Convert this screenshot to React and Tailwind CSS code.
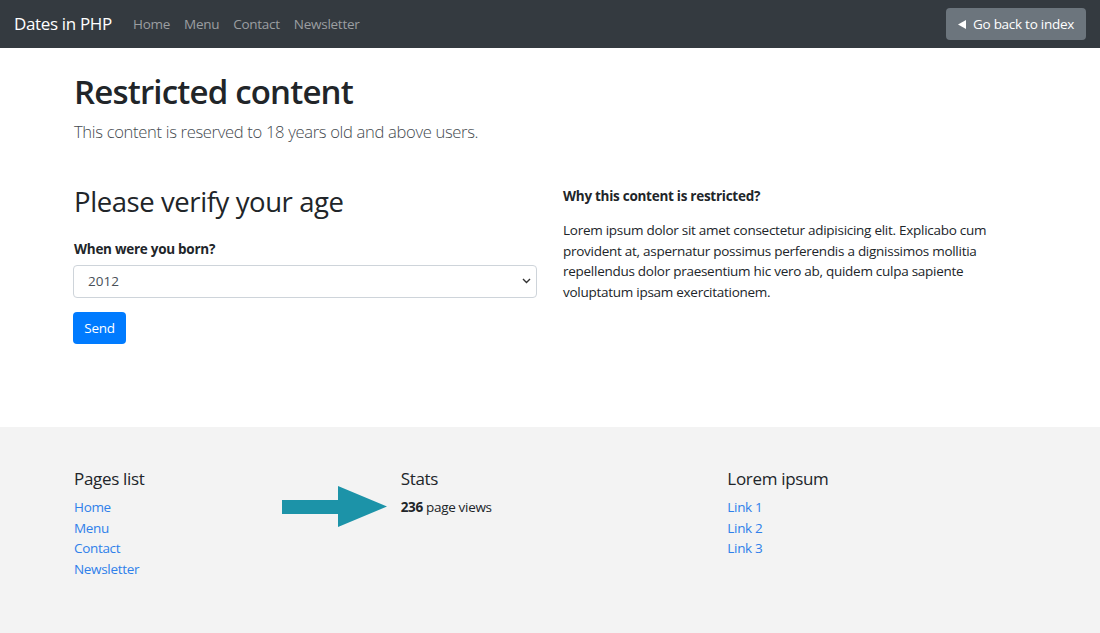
import React from "react";

const font = { fontFamily: '"Open Sans", "Noto Sans", sans-serif' };

function Navbar() {
  return (
    <nav className="h-[48px] bg-[#343a40] flex items-center justify-between pl-[14px] pr-[14px]">
      <div className="flex items-center">
        <span className="text-[17px] tracking-[-0.02em] text-white mr-[21px]">Dates in PHP</span>
        <div className="flex items-center gap-[14px] text-[13.5px] tracking-[-0.02em] text-[#9b9ea1]">
          <a href="#">Home</a>
          <a href="#">Menu</a>
          <a href="#">Contact</a>
          <a href="#">Newsletter</a>
        </div>
      </div>
      <button className="h-[32px] w-[140px] rounded-[4px] bg-[#6c757d] text-white text-[13.5px] tracking-[-0.02em] flex items-center justify-center gap-[7px]">
        <svg width="8" height="9" viewBox="0 0 8 9">
          <polygon points="8,0 8,9 0,4.5" fill="#fff" />
        </svg>
        Go back to index
      </button>
    </nav>
  );
}

function Main() {
  return (
    <main className="h-[379px] pl-[74px] pt-[22px]">
      <div className="w-[980px]">
        <h1 className="text-[33px] leading-[43px] font-semibold tracking-[-0.025em] text-[#212529]">
          Restricted content
        </h1>
        <p className="mt-[5px] text-[16.6px] leading-[27px] font-light tracking-[-0.02em] text-[#454a4f]">
          This content is reserved to 18 years old and above users.
        </p>
        <div className="mt-[39px] grid grid-cols-[463px_437px] gap-[26px]">
          <div>
            <h2 className="text-[27.5px] leading-[35px] font-medium tracking-[-0.015em] text-[#212529]">
              Please verify your age
            </h2>
            <label className="block mt-[19px] text-[13.5px] leading-[22px] font-bold tracking-[-0.02em] text-[#212529]">
              When were you born?
            </label>
            <div className="relative mt-[5px]">
              <select className="appearance-none w-[464px] h-[33px] border border-[#ced4da] rounded-[4px] bg-white pl-[14px] text-[13.5px] text-[#495057] -ml-[1px]">
                <option>2012</option>
              </select>
              <svg className="absolute right-[6px] top-[13px]" width="9" height="6" viewBox="0 0 9 6">
                <path d="M1 1l3.5 3.5L8 1" fill="none" stroke="#333" strokeWidth="1.4" />
              </svg>
            </div>
            <button className="mt-[14px] -ml-[1px] h-[32px] w-[53px] rounded-[4px] bg-[#007bff] text-white text-[13.5px] tracking-[-0.02em]">
              Send
            </button>
          </div>
          <div>
            <h5 className="mt-[1px] text-[13.5px] leading-[22px] font-bold tracking-[-0.02em] text-[#212529]">
              Why this content is restricted?
            </h5>
            <p className="mt-[13px] text-[13.5px] leading-[20.7px] tracking-[-0.02em] text-[#212529]">
              Lorem ipsum dolor sit amet consectetur adipisicing elit. Explicabo cum
              provident at, aspernatur possimus perferendis a dignissimos mollitia
              repellendus dolor praesentium hic vero ab, quidem culpa sapiente
              voluptatum ipsam exercitationem.
            </p>
          </div>
        </div>
      </div>
    </main>
  );
}

function Footer() {
  return (
    <footer className="relative h-[206px] bg-[#f3f3f3] pl-[74px] pt-[41px]">
      <div className="w-[980px] grid grid-cols-3 tracking-[-0.02em]">
        <div>
          <h5 className="text-[17px] leading-[22px] font-medium text-[#212529]">Pages list</h5>
          <ul className="mt-[7px] text-[13.5px] leading-[20.7px] text-[#2f80ea]">
            <li><a href="#">Home</a></li>
            <li><a href="#">Menu</a></li>
            <li><a href="#">Contact</a></li>
            <li><a href="#">Newsletter</a></li>
          </ul>
        </div>
        <div>
          <h5 className="text-[17px] leading-[22px] font-medium text-[#212529]">Stats</h5>
          <p className="mt-[7px] text-[13.5px] leading-[20.7px] text-[#212529]">
            <b>236</b> page views
          </p>
        </div>
        <div>
          <h5 className="text-[17px] leading-[22px] font-medium text-[#212529]">Lorem ipsum</h5>
          <ul className="mt-[7px] text-[13.5px] leading-[20.7px] text-[#2f80ea]">
            <li><a href="#">Link 1</a></li>
            <li><a href="#">Link 2</a></li>
            <li><a href="#">Link 3</a></li>
          </ul>
        </div>
      </div>
      <svg className="absolute left-[282px] top-[59px]" width="106" height="42" viewBox="0 0 106 42">
        <polygon points="0,14 56,14 56,0 105,20.5 56,41 56,28 0,28" fill="#1c93a8" />
      </svg>
    </footer>
  );
}

export default function App() {
  return (
    <div style={font} className="w-[1100px] h-[633px] overflow-hidden bg-white">
      <Navbar />
      <Main />
      <Footer />
    </div>
  );
}
